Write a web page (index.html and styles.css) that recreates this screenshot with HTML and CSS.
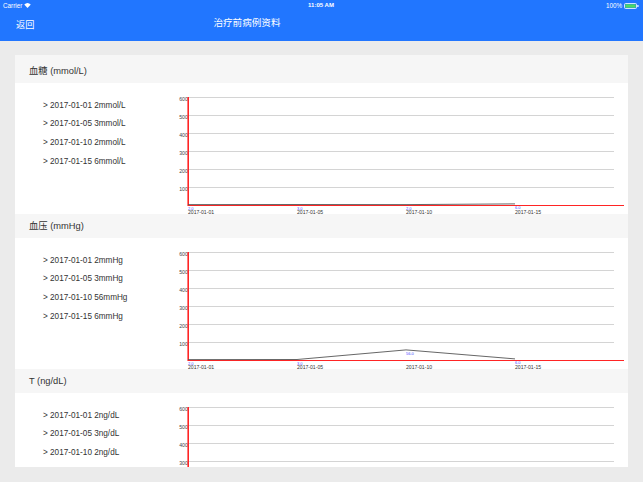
FILE: index.html
```html
<!DOCTYPE html>
<html lang="zh">
<head>
<meta charset="utf-8">
<title>治疗前病例资料</title>
<link rel="stylesheet" href="styles.css">
</head>
<body>
<header class="nav">
  <div class="status">
    <div class="status-left">Carrier
      <svg class="wifi" width="7" height="5" viewBox="0 0 14 10"><path d="M7 10 L0.5 3.2 A9.5 9.5 0 0 1 13.5 3.2 Z" fill="#fff"/></svg>
    </div>
    <div class="status-mid">11:05 AM</div>
    <div class="status-right">100%
      <svg class="battery" width="15" height="6" viewBox="0 0 15 6"><rect x="0.5" y="0.5" width="12" height="5" rx="1" fill="none" stroke="#fff" stroke-width="0.8"/><rect x="1.3" y="1.3" width="10.4" height="3.4" fill="#4cd964"/><rect x="13.3" y="2" width="1.2" height="2" fill="#fff"/></svg>
    </div>
  </div>
  <div class="navrow">
    <span class="back">返回</span>
    <span class="title">治疗前病例资料</span>
  </div>
</header>
<main class="main">
  <div class="card">
    <section class="section">
      <div class="sec-head sec-head--first">血糖 (mmol/L)</div>
      <div class="sec-body">
        <ul class="records">
          <li>&gt; 2017-01-01 2mmol/L</li>
          <li>&gt; 2017-01-05 3mmol/L</li>
          <li>&gt; 2017-01-10 2mmol/L</li>
          <li>&gt; 2017-01-15 6mmol/L</li>
        </ul>
        <svg class="chart" width="453" height="131" viewBox="0 0 453 131">
          <g class="grid">
            <line x1="13" y1="14.5" x2="439" y2="14.5"/><line x1="13" y1="32.5" x2="439" y2="32.5"/><line x1="13" y1="50.5" x2="439" y2="50.5"/><line x1="13" y1="68.5" x2="439" y2="68.5"/><line x1="13" y1="86.5" x2="439" y2="86.5"/><line x1="13" y1="104.5" x2="439" y2="104.5"/>
          </g>
          <g class="ylab">
            <text x="12.8" y="17.8">600</text><text x="12.8" y="35.8">500</text><text x="12.8" y="53.8">400</text><text x="12.8" y="71.8">300</text><text x="12.8" y="89.8">200</text><text x="12.8" y="107.8">100</text>
          </g>
          <line class="base" x1="13" y1="122.5" x2="449" y2="122.5"/>
          <line class="axis" x1="13.2" y1="14" x2="13.2" y2="123"/>
          <polyline class="data" points="13,121.6 122,121.5 231,121.6 340,120.9"/>
          <g class="vlab">
            <text x="13" y="126.5">2.0</text><text x="122" y="126.5">3.0</text><text x="231" y="126.5">2.0</text><text x="340" y="126">6.0</text>
          </g>
          <g class="xlab">
            <text x="13" y="131">2017-01-01</text><text x="122" y="131">2017-01-05</text><text x="231" y="131">2017-01-10</text><text x="340" y="131">2017-01-15</text>
          </g>
        </svg>
      </div>
    </section>
    <section class="section">
      <div class="sec-head">血压 (mmHg)</div>
      <div class="sec-body">
        <ul class="records">
          <li>&gt; 2017-01-01 2mmHg</li>
          <li>&gt; 2017-01-05 3mmHg</li>
          <li>&gt; 2017-01-10 56mmHg</li>
          <li>&gt; 2017-01-15 6mmHg</li>
        </ul>
        <svg class="chart" width="453" height="131" viewBox="0 0 453 131">
          <g class="grid">
            <line x1="13" y1="14.5" x2="439" y2="14.5"/><line x1="13" y1="32.5" x2="439" y2="32.5"/><line x1="13" y1="50.5" x2="439" y2="50.5"/><line x1="13" y1="68.5" x2="439" y2="68.5"/><line x1="13" y1="86.5" x2="439" y2="86.5"/><line x1="13" y1="104.5" x2="439" y2="104.5"/>
          </g>
          <g class="ylab">
            <text x="12.8" y="17.8">600</text><text x="12.8" y="35.8">500</text><text x="12.8" y="53.8">400</text><text x="12.8" y="71.8">300</text><text x="12.8" y="89.8">200</text><text x="12.8" y="107.8">100</text>
          </g>
          <line class="base" x1="13" y1="122.5" x2="449" y2="122.5"/>
          <line class="axis" x1="13.2" y1="14" x2="13.2" y2="123"/>
          <polyline class="data" points="13,121.6 122,121.5 231,111.9 340,120.9"/>
          <g class="vlab">
            <text x="13" y="126.5">2.0</text><text x="122" y="126.5">3.0</text><text x="231" y="117">56.0</text><text x="340" y="126">6.0</text>
          </g>
          <g class="xlab">
            <text x="13" y="131">2017-01-01</text><text x="122" y="131">2017-01-05</text><text x="231" y="131">2017-01-10</text><text x="340" y="131">2017-01-15</text>
          </g>
        </svg>
      </div>
    </section>
    <section class="section">
      <div class="sec-head">T (ng/dL)</div>
      <div class="sec-body sec-body--clipped">
        <ul class="records">
          <li>&gt; 2017-01-01 2ng/dL</li>
          <li>&gt; 2017-01-05 3ng/dL</li>
          <li>&gt; 2017-01-10 2ng/dL</li>
        </ul>
        <svg class="chart" width="453" height="74" viewBox="0 0 453 74">
          <g class="grid">
            <line x1="13" y1="14.5" x2="439" y2="14.5"/><line x1="13" y1="32.5" x2="439" y2="32.5"/><line x1="13" y1="50.5" x2="439" y2="50.5"/><line x1="13" y1="68.5" x2="439" y2="68.5"/>
          </g>
          <g class="ylab">
            <text x="12.8" y="17.8">600</text><text x="12.8" y="35.8">500</text><text x="12.8" y="53.8">400</text><text x="12.8" y="71.8">300</text>
          </g>
          <line class="axis" x1="13.2" y1="14" x2="13.2" y2="74"/>
        </svg>
      </div>
    </section>
  </div>
</main>
</body>
</html>
```
FILE: styles.css
```css
* { box-sizing: border-box; }
html, body { margin: 0; padding: 0; }
body {
  width: 643px;
  height: 482px;
  overflow: hidden;
  font-family: "Liberation Sans", "Noto Sans CJK SC", sans-serif;
  color: #333;
  background: #ebebeb;
}
.nav {
  height: 41px;
  background: #2176ff;
  color: #fff;
}
.status {
  height: 11px;
  display: flex;
  align-items: center;
  justify-content: space-between;
  padding: 0 4px 0 3px;
  font-size: 6.3px;
  line-height: 11px;
}
.status-left, .status-right {
  display: flex;
  align-items: center;
  gap: 2px;
  width: 60px;
}
.status-right { justify-content: flex-end; gap: 2px; }
.status-mid { font-weight: bold; font-size: 6px; }
.navrow {
  height: 30px;
  display: flex;
  align-items: flex-start;
  padding-left: 16px;
  font-family: "Noto Sans CJK SC", sans-serif;
}
.back {
  margin-top: 7px;
  font-size: 9.2px;
  line-height: 12px;
}
.title {
  margin-top: 5px;
  margin-left: 179px;
  font-size: 9.6px;
  line-height: 12px;
}
.main {
  height: 441px;
  padding: 14px 15px 15px;
}
.card {
  height: 412px;
  overflow: hidden;
  background: #fff;
}
.sec-head {
  height: 24px;
  line-height: 24px;
  padding-left: 14px;
  background: #f6f6f6;
  font-size: 9.3px;
  color: #333;
}
.sec-head--first {
  height: 28px;
  padding-top: 4px;
}
.sec-body {
  height: 131px;
  display: flex;
  background: #fff;
}
.sec-body--clipped { height: 74px; overflow: hidden; }
.records {
  list-style: none;
  margin: 0;
  width: 160px;
  flex: none;
  padding: 13.5px 0 0 28px;
  font-size: 8.2px;
  line-height: 18.7px;
  color: #333;
}
.chart {
  display: block;
  flex: none;
  overflow: visible;
}
.grid line { stroke: #d4d4d4; stroke-width: 1; }
.base { stroke: #ff2424; stroke-width: 1; }
.axis { stroke: #ff2424; stroke-width: 1.6; }
.data { fill: none; stroke: #555; stroke-width: 0.9; }
.ylab text {
  font-family: "Liberation Sans", sans-serif;
  font-size: 5.2px;
  fill: #444;
  text-anchor: end;
}
.xlab text {
  font-family: "Liberation Sans", sans-serif;
  font-size: 5.1px;
  fill: #333;
}
.vlab text {
  font-family: "Liberation Sans", sans-serif;
  font-size: 4px;
  fill: #4a4aff;
}
```
